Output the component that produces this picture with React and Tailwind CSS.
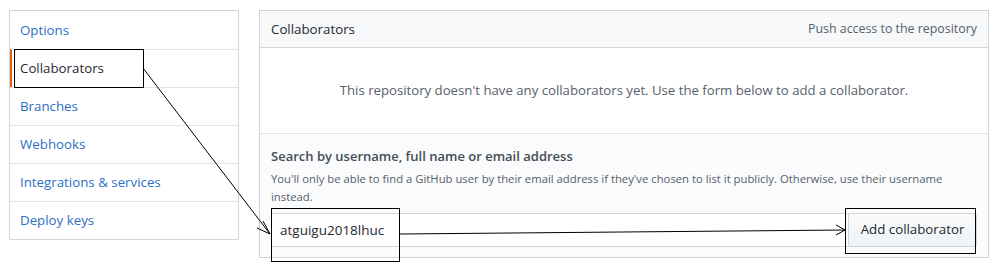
import React from "react";

const items = ["Options", "Collaborators", "Branches", "Webhooks", "Integrations & services", "Deploy keys"];

function Sidebar() {
  return (
    <nav className="mt-[10px] ml-[9px] w-[230px] self-start border border-[#d1d5da] bg-white">
      {items.map((name, i) => (
        <div
          key={name}
          className={
            "flex h-[38px] items-center px-[10px] pt-[1px] text-[13.3px] " +
            (i > 0 ? "border-t border-[#e1e4e8] " : "") +
            (name === "Collaborators"
              ? "border-l-[2px] border-l-[#e36209] pl-[8px] text-[#24292e]"
              : "text-[#2d6fc4]")
          }
        >
          {name}
        </div>
      ))}
    </nav>
  );
}

function Panel() {
  return (
    <section className="mt-[10px] ml-[20px] w-[730px] border border-[#d1d5da] bg-white">
      <div className="flex h-[37px] items-center justify-between border-b border-[#d1d5da] bg-[#f6f8fa] px-[11px] pt-[1px]">
        <span className="text-[13.3px] text-[#24292e]">Collaborators</span>
        <span className="text-[12.4px] text-[#586069]">Push access to the repository</span>
      </div>
      <div className="flex h-[85px] items-center justify-center pt-[1px] text-[13.2px] text-[#586069]">
        This repository doesn't have any collaborators yet. Use the form below to add a collaborator.
      </div>
      <div className="border-t border-[#e1e4e8] bg-[#fafbfc] px-[11px] pt-[12px] pb-[10px]">
        <div className="text-[13px] font-semibold leading-[20px] text-[#444d56]">
          Search by username, full name or email address
        </div>
        <p className="mt-[4px] pr-[4px] text-[11.3px] leading-[18px] text-[#586069]">
          You'll only be able to find a GitHub user by their email address if they've chosen to list it publicly. Otherwise, use their username instead.
        </p>
        <div className="mt-[7px] flex h-[34px] items-stretch">
          <div className="flex flex-1 items-center border border-[#d1d5da] bg-white px-[8px] text-[13.5px] text-[#24292e]">
            atguigu2018lhuc
          </div>
          <button className="ml-[-1px] w-[129px] rounded-r-[3px] border border-[#d1d5da] bg-gradient-to-b from-[#fafbfc] to-[#eff3f6] text-[13.3px] text-[#24292e]">
            Add collaborator
          </button>
        </div>
      </div>
    </section>
  );
}

export default function App() {
  return (
    <div className="relative h-[265px] w-[995px] bg-white" style={{ fontFamily: "'Open Sans', 'Noto Sans', sans-serif" }}>
      <div className="flex">
        <Sidebar />
        <Panel />
      </div>
      <div className="absolute left-[14px] top-[49px] h-[39px] w-[130px] border-[1.5px] border-black" />
      <div className="absolute left-[271px] top-[208px] h-[54px] w-[129px] border-[1.5px] border-black" />
      <div className="absolute left-[845px] top-[208px] h-[46px] w-[131px] border-[1.5px] border-black" />
      <svg className="pointer-events-none absolute left-0 top-0" width="995" height="265">
        <g stroke="#000" strokeWidth="1" fill="none">
          <line x1="143" y1="68" x2="270" y2="234" />
          <polyline points="263,221 270,234 257,228" />
          <line x1="400" y1="234" x2="845" y2="230" />
          <polyline points="836,225 845,230 836,235" />
        </g>
      </svg>
    </div>
  );
}
